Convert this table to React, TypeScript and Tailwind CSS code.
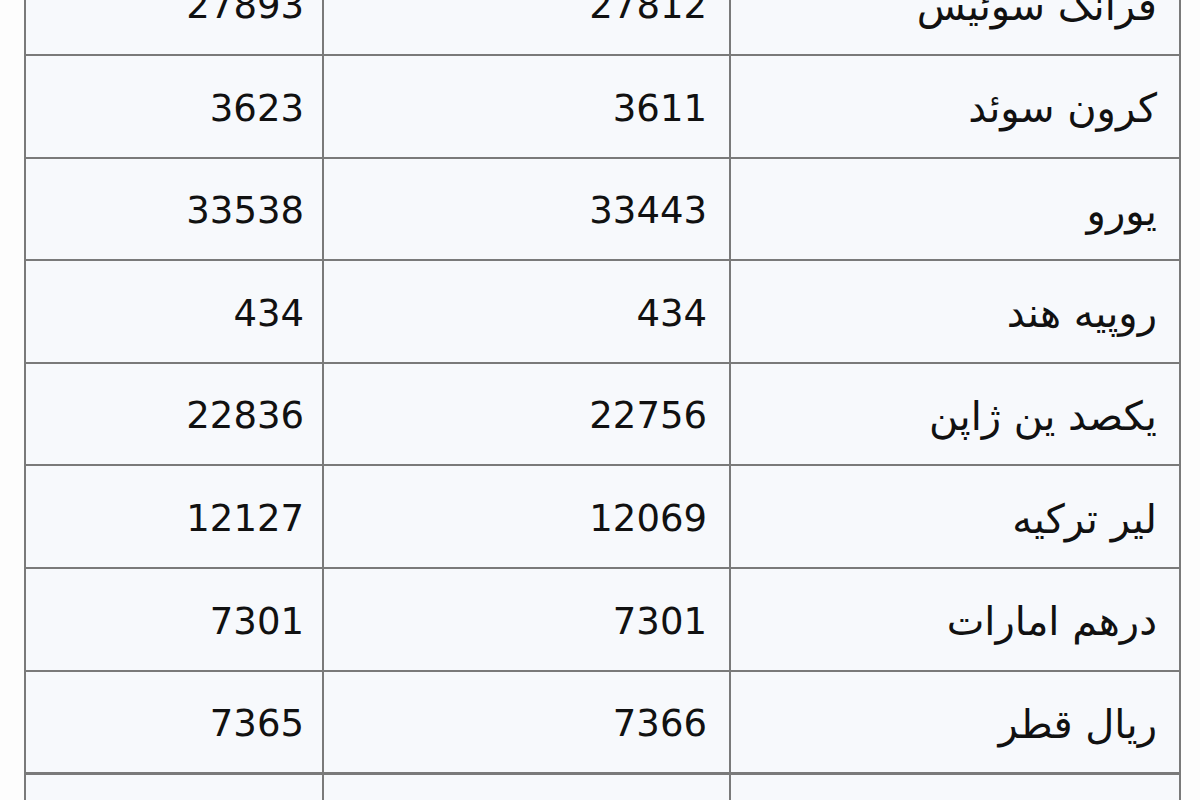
import React from "react";

const rows: [string, string, string][] = [
  ["27893", "27812", "فرانک سوئیس"],
  ["3623", "3611", "کرون سوئد"],
  ["33538", "33443", "یورو"],
  ["434", "434", "روپیه هند"],
  ["22836", "22756", "یکصد ین ژاپن"],
  ["12127", "12069", "لیر ترکیه"],
  ["7301", "7301", "درهم امارات"],
  ["7365", "7366", "ریال قطر"],
];

const font = { fontFamily: '"DejaVu Sans", Verdana, sans-serif' };

function Row({ r }: { r: [string, string, string] }) {
  return (
    <>
      <div className="bg-[#f7f9fc] h-[100.6px] flex items-center justify-end pr-[18px] pt-[4px] text-[37px] text-[#111]">
        {r[0]}
      </div>
      <div className="bg-[#f7f9fc] h-[100.6px] flex items-center justify-end pr-[22px] pt-[4px] text-[37px] text-[#111]">
        {r[1]}
      </div>
      <div
        dir="rtl"
        className="bg-[#f7f9fc] h-[100.6px] flex items-center justify-start pr-[22px] pt-[4px] text-[40px] text-[#111]"
      >
        {r[2]}
      </div>
    </>
  );
}

export default function App() {
  return (
    <div className="w-[1200px] h-[800px] overflow-hidden bg-[#fdfdfd]" style={font}>
      <div className="ml-[24px] w-[1157px] mt-[-48.6px] bg-[#7a7a7a] p-[2px] pb-0">
        <div className="grid grid-cols-[296px_405px_448px] gap-[2px]">
          {rows.map((r, i) => (
            <Row key={i} r={r} />
          ))}
        </div>
        <div className="grid grid-cols-[296px_405px_448px] gap-[2px] mt-[3px]">
          <Row r={["7185", "7184", "ریال عمان"]} />
        </div>
      </div>
    </div>
  );
}
